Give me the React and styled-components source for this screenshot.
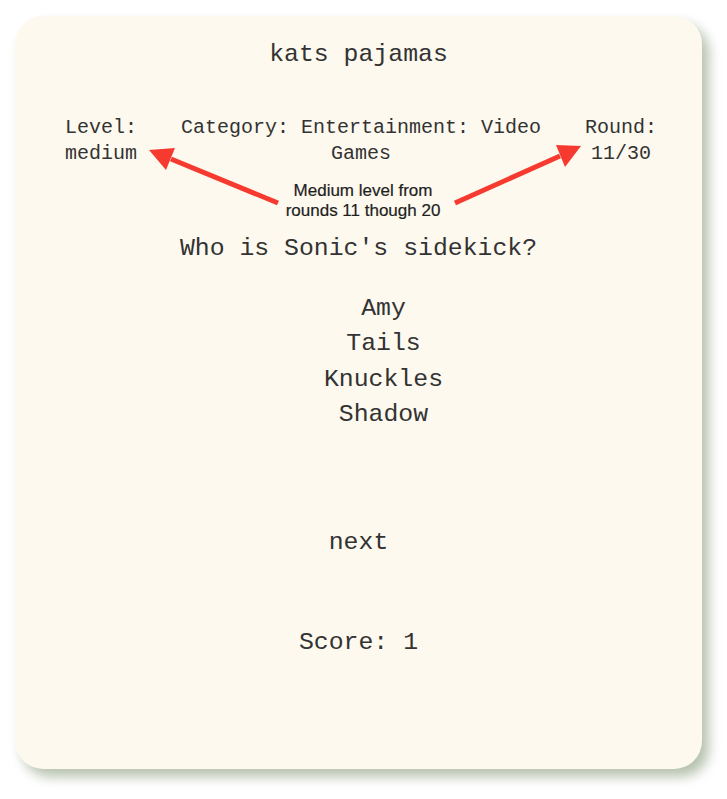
import React from "react";
import styled, { createGlobalStyle } from "styled-components";

const Global = createGlobalStyle`
  html, body { margin: 0; padding: 0; background: #ffffff; }
  body { font-family: "Liberation Mono", "DejaVu Sans Mono", monospace; }
`;

const Page = styled.div`
  padding: 16px 25px 30px 15px;
`;

const Card = styled.main`
  position: relative;
  box-sizing: border-box;
  height: 753px;
  background: #fdf9ee;
  border-radius: 28px;
  box-shadow: 7px 8px 12px rgba(160, 175, 150, 0.75);
  display: flex;
  flex-direction: column;
  align-items: center;
  padding-top: 24px;
  color: #333333;
`;

const Title = styled.h1`
  margin: 0;
  font-size: 24.8px;
  line-height: 29px;
  font-weight: 400;
`;

const InfoRow = styled.div`
  align-self: stretch;
  display: flex;
  justify-content: space-between;
  align-items: flex-start;
  margin: 46px 45px 0 50px;
`;

const InfoItem = styled.div`
  font-size: 20px;
  line-height: 26px;
  text-align: center;
  width: ${(p) => p.$ch}ch;
`;

const Question = styled.h2`
  margin: 67px 0 0;
  font-size: 24.8px;
  line-height: 29px;
  font-weight: 400;
`;

const Answers = styled.ul`
  list-style: none;
  margin: 28px 0 0;
  padding: 0 0 0 50px;
  display: flex;
  flex-direction: column;
  align-items: center;
`;

const Answer = styled.li`
  font-size: 24.8px;
  line-height: 35.4px;
`;

const NextButton = styled.button`
  margin-top: 95px;
  background: none;
  border: none;
  padding: 0;
  font-family: inherit;
  font-size: 24.8px;
  line-height: 29px;
  color: inherit;
  cursor: pointer;
`;

const Score = styled.p`
  margin: 71px 0 0;
  font-size: 24.8px;
  line-height: 29px;
`;

const Overlay = styled.svg`
  position: absolute;
  inset: 0;
  pointer-events: none;
`;

const Note = styled.div`
  position: absolute;
  left: 348px;
  top: 165px;
  transform: translateX(-50%);
  font-family: "Liberation Sans", Arial, sans-serif;
  font-size: 17px;
  line-height: 20px;
  font-weight: 400;
  color: #1e1e1e;
  text-align: center;
  white-space: nowrap;
  -webkit-text-stroke: 0.2px #1e1e1e;
`;

const ARROW = "#f63a2f";

export default function App() {
  return (
    <>
      <Global />
      <Page>
        <Card>
          <Title>kats pajamas</Title>
          <InfoRow>
            <InfoItem $ch={6}>Level: medium</InfoItem>
            <InfoItem $ch={30}>Category: Entertainment: Video Games</InfoItem>
            <InfoItem $ch={6}>Round: 11/30</InfoItem>
          </InfoRow>
          <Question>Who is Sonic's sidekick?</Question>
          <Answers>
            <Answer>Amy</Answer>
            <Answer>Tails</Answer>
            <Answer>Knuckles</Answer>
            <Answer>Shadow</Answer>
          </Answers>
          <NextButton>next</NextButton>
          <Score>Score: 1</Score>

          <Overlay width="687" height="753" viewBox="0 0 687 753">
            <line x1="263" y1="187" x2="156" y2="143" stroke={ARROW} strokeWidth="5" />
            <polygon points="134,134 160,132 151,154" fill={ARROW} />
            <line x1="440" y1="187" x2="545" y2="140" stroke={ARROW} strokeWidth="5" />
            <polygon points="566,130 541,129 550,151" fill={ARROW} />
          </Overlay>
          <Note>
            Medium level from
            <br />
            rounds 11 though 20
          </Note>
        </Card>
      </Page>
    </>
  );
}
